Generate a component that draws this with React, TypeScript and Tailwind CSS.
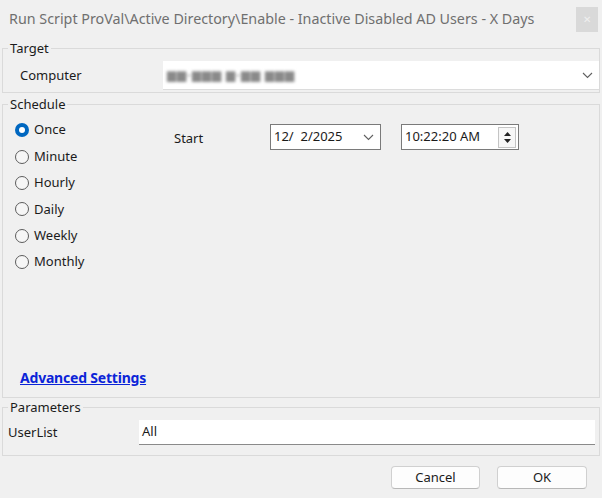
import React from "react";

const font = { fontFamily: '"Noto Sans", "Segoe UI", sans-serif' };

function Radio({ label, checked }: { label: string; checked?: boolean }) {
  return (
    <div className="flex h-[26.4px] items-center gap-[5px]">
      {checked ? (
        <span className="flex h-[14px] w-[14px] items-center justify-center rounded-full bg-[#0067c0]">
          <span className="h-[6px] w-[6px] rounded-full bg-white" />
        </span>
      ) : (
        <span className="h-[14px] w-[14px] rounded-full border border-[#5d5d5d] bg-[#f6f6f6]" />
      )}
      <span className="text-[13px] text-[#1b1b1b]">{label}</span>
    </div>
  );
}

function Chevron({ className }: { className: string }) {
  return (
    <svg className={className} width="11" height="7" viewBox="0 0 11 7" fill="none">
      <path d="M1 1l4.5 4.5L10 1" stroke="#606060" strokeWidth="1.1" />
    </svg>
  );
}

function Group({
  title,
  className,
  children,
}: {
  title: string;
  className: string;
  children: React.ReactNode;
}) {
  return (
    <fieldset className={`mx-[2px] border border-[#dadada] ${className}`}>
      <legend className="ml-[5px] px-[2px] text-[13px] leading-[17px] text-[#1b1b1b]">
        {title}
      </legend>
      {children}
    </fieldset>
  );
}

export default function App() {
  const radios = ["Once", "Minute", "Hourly", "Daily", "Weekly", "Monthly"];
  return (
    <div className="flex h-[498px] w-[602px] flex-col bg-[#f0f0f0]" style={font}>
      {/* title bar */}
      <div className="flex h-[38px] items-center pl-[9px] pr-[4px]">
        <span className="text-[14.3px] text-[#6f6f6f]">
          Run Script ProVal\Active Directory\Enable - Inactive Disabled AD Users - X Days
        </span>
        <div className="ml-auto flex h-[25px] w-[22px] items-center justify-center bg-[#d9d9d9] text-[10px] text-[#efefef]">
          ✕
        </div>
      </div>

      <Group title="Target" className="mt-[2px] h-[53px]">
        <div className="mt-[4px] flex items-center">
          <span className="w-[160px] pl-[17px] text-[13px] text-[#1b1b1b]">Computer</span>
          <div className="flex h-[29px] flex-1 items-center border-b border-[#dcdcdc] bg-white pl-[4px] pr-[6px]">
            <span className="text-[12px] tracking-[1px] text-[#8a8a8a] blur-[1.5px]">
              ▆▆-▆▆▆ ▆-▆▆ ▆▆▆
            </span>
            <Chevron className="ml-auto" />
          </div>
        </div>
      </Group>

      <Group title="Schedule" className="mt-[3px] h-[302px]">
        <div className="flex h-[283px] flex-col">
          <div className="flex pt-[4px]">
            <div className="w-[171px] pl-[12px]">
              {radios.map((r, i) => (
                <Radio key={r} label={r} checked={i === 0} />
              ))}
            </div>
            <div className="flex h-[40px] items-center">
              <span className="mt-[4px] w-[96px] text-[13px] text-[#1b1b1b]">Start</span>
              <div className="flex h-[26px] w-[111px] items-center border border-[#7a7a7a] bg-white pl-[3px] pr-[6px]">
                <span className="text-[13px] text-[#1b1b1b]">12/&nbsp;&nbsp;2/2025</span>
                <Chevron className="ml-auto" />
              </div>
              <div className="ml-[20px] flex h-[26px] w-[118px] items-center border border-[#7a7a7a] bg-white pl-[3px] pr-[2px]">
                <span className="text-[13px] text-[#1b1b1b]">10:22:20 AM</span>
                <div className="ml-auto flex h-[21px] w-[18px] flex-col items-center justify-center gap-[3px] border border-[#c4c4c4] bg-[#f7f7f7]">
                  <svg width="7" height="4" viewBox="0 0 7 4">
                    <path d="M0 4L3.5 0L7 4z" fill="#222" />
                  </svg>
                  <svg width="7" height="4" viewBox="0 0 7 4">
                    <path d="M0 0L3.5 4L7 0z" fill="#222" />
                  </svg>
                </div>
              </div>
            </div>
          </div>
          <div className="mt-auto pb-[7px] pl-[17px]">
            <span className="text-[14px] font-bold tracking-[-0.2px] text-[#0b24d8] underline">
              Advanced Settings
            </span>
          </div>
        </div>
      </Group>

      <Group title="Parameters" className="mt-[1px] h-[57px]">
        <div className="mt-[4px] flex items-center">
          <span className="w-[136px] pl-[5px] text-[13px] text-[#1b1b1b]">UserList</span>
          <div className="mr-[4px] flex h-[25px] flex-1 items-center border-b border-[#8a8a8a] bg-white pl-[3px]">
            <span className="text-[13px] text-[#1b1b1b]">All</span>
          </div>
        </div>
      </Group>

      <div className="mt-[10px] flex justify-end gap-[17px] pr-[15px]">
        <button className="h-[23px] w-[89px] rounded-[4px] border border-[#d0d0d0] border-b-[#b8b8b8] bg-[#fdfdfd] text-[13px] text-[#1b1b1b]">
          Cancel
        </button>
        <button className="h-[23px] w-[90px] rounded-[4px] border border-[#d0d0d0] border-b-[#b8b8b8] bg-[#fdfdfd] text-[13px] text-[#1b1b1b]">
          OK
        </button>
      </div>
    </div>
  );
}
